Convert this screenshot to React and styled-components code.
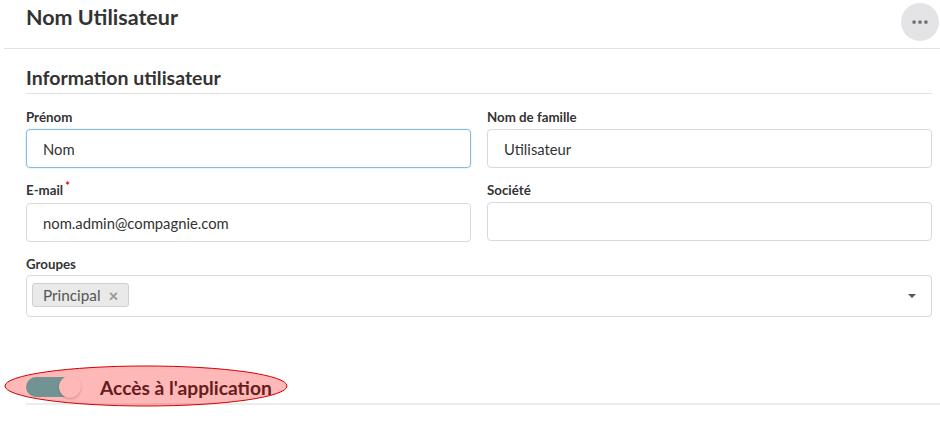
import React from "react";
import styled, { createGlobalStyle } from "styled-components";

const Global = createGlobalStyle`
  html, body { margin: 0; padding: 0; background: #fff; }
  body { font-family: Lato, "Open Sans", sans-serif; color: #333; }
  * { box-sizing: border-box; }
`;

const Page = styled.div`
  position: relative;
  width: 940px;
  height: 427px;
  padding-left: 4px;
  overflow: hidden;
`;

const Header = styled.header`
  display: flex;
  align-items: flex-start;
  justify-content: space-between;
  height: 49px;
  padding: 0 1px 0 22px;
  border-bottom: 1px solid #e2e2e2;
`;

const Title = styled.h1`
  margin: 3px 0 0;
  font-size: 21.5px;
  line-height: 28px;
  font-weight: 700;
  color: #333;
`;

const MenuButton = styled.button`
  width: 38px;
  height: 38px;
  margin-top: 3px;
  border: none;
  border-radius: 50%;
  background: #e4e4e6;
  display: flex;
  align-items: center;
  justify-content: center;
  padding: 0;
`;

const Section = styled.section`
  margin: 0 8px 0 22px;
`;

const SectionTitle = styled.h2`
  margin: 16px 0 0;
  padding-bottom: 3px;
  font-size: 19.5px;
  line-height: 25px;
  font-weight: 700;
  color: #333;
  border-bottom: 1px solid #e2e2e2;
`;

const Grid = styled.div`
  display: grid;
  grid-template-columns: 1fr 1fr;
  column-gap: 16px;
  row-gap: 14px;
  margin-top: 15px;
`;

const Field = styled.div`
  display: flex;
  flex-direction: column;
  grid-column: ${(p) => (p.$wide ? "1 / -1" : "auto")};
`;

const Label = styled.label`
  font-size: 13.3px;
  line-height: 16px;
  font-weight: 700;
  color: #333;
  margin-bottom: ${(p) => (p.$tight ? "3px" : "4px")};
`;

const Required = styled.span`
  color: #e30000;
  font-size: 11px;
  position: relative;
  top: -5px;
  margin-left: 2px;
`;

const Input = styled.div`
  height: 39px;
  border: 1px solid ${(p) => (p.$focused ? "#86bbdd" : "#d9d9d9")};
  border-radius: 4px;
  padding: 0 16px;
  display: flex;
  align-items: center;
  font-size: 14.8px;
  color: #333;
  box-shadow: ${(p) => (p.$focused ? "0 0 2px rgba(100,160,210,0.4)" : "none")};
`;

const Select = styled.div`
  height: 42px;
  border: 1px solid #d9d9d9;
  border-radius: 4px;
  padding: 0 15px 0 5px;
  display: flex;
  align-items: center;
  justify-content: space-between;
`;

const Tag = styled.span`
  display: inline-flex;
  align-items: center;
  height: 24px;
  margin-top: -2px;
  padding: 0 10px 0 10px;
  border: 1px solid #cfcfcf;
  border-radius: 3px;
  background: #e9e9e9;
  font-size: 15.3px;
  color: #555;
  gap: 8px;
`;

const TagClose = styled.span`
  font-size: 17px;
  font-weight: 900;
  color: #999;
  line-height: 1;
`;

const Caret = styled.span`
  width: 0;
  height: 0;
  border-left: 4px solid transparent;
  border-right: 4px solid transparent;
  border-top: 4px solid #555;
`;

const ToggleRow = styled.div`
  display: flex;
  align-items: center;
  gap: 20px;
  height: 30px;
  margin: 55px 0 0 22px;
  padding-bottom: 1px;
  border-bottom: 2px solid #ececec;
  box-sizing: content-box;
`;

const Track = styled.span`
  position: relative;
  width: 54px;
  height: 20px;
  border-radius: 10px;
  background: ${(p) => (p.$on ? "#3ccccc" : "#ccc")};
  display: inline-block;
`;

const Knob = styled.span`
  position: absolute;
  top: -1px;
  right: -1px;
  width: 22px;
  height: 22px;
  border-radius: 50%;
  background: #fff;
  box-shadow: 0 1px 2px rgba(0, 0, 0, 0.25);
`;

const ToggleLabel = styled.span`
  font-size: 19.2px;
  font-weight: 700;
  color: #2a2a2a;
`;

const Annotation = styled.svg`
  position: absolute;
  left: 0;
  top: 0;
  pointer-events: none;
`;

export default function App() {
  return (
    <>
      <Global />
      <Page>
        <Header>
          <Title>Nom Utilisateur</Title>
          <MenuButton aria-label="menu">
            <svg width="18" height="6" viewBox="0 0 18 6">
              <rect x="1.5" y="1.5" width="3.2" height="3.2" rx="0.7" fill="#707070" />
              <rect x="7.4" y="1.5" width="3.2" height="3.2" rx="0.7" fill="#707070" />
              <rect x="13.3" y="1.5" width="3.2" height="3.2" rx="0.7" fill="#707070" />
            </svg>
          </MenuButton>
        </Header>
        <Section>
          <SectionTitle>Information utilisateur</SectionTitle>
          <Grid>
            <Field>
              <Label>Prénom</Label>
              <Input $focused>Nom</Input>
            </Field>
            <Field>
              <Label>Nom de famille</Label>
              <Input>Utilisateur</Input>
            </Field>
            <Field>
              <Label>
                E-mail<Required>*</Required>
              </Label>
              <Input>nom.admin@compagnie.com</Input>
            </Field>
            <Field>
              <Label>Société</Label>
              <Input />
            </Field>
            <Field $wide>
              <Label $tight>Groupes</Label>
              <Select>
                <Tag>
                  Principal <TagClose>×</TagClose>
                </Tag>
                <Caret />
              </Select>
            </Field>
          </Grid>
        </Section>
        <ToggleRow>
          <Track $on>
            <Knob />
          </Track>
          <ToggleLabel>Accès à l'application</ToggleLabel>
        </ToggleRow>
        <Annotation width="940" height="427" viewBox="0 0 940 427">
          <ellipse cx="146" cy="386" rx="141" ry="20" fill="rgba(255,0,0,0.28)" stroke="#d40000" strokeWidth="1" />
        </Annotation>
      </Page>
    </>
  );
}
